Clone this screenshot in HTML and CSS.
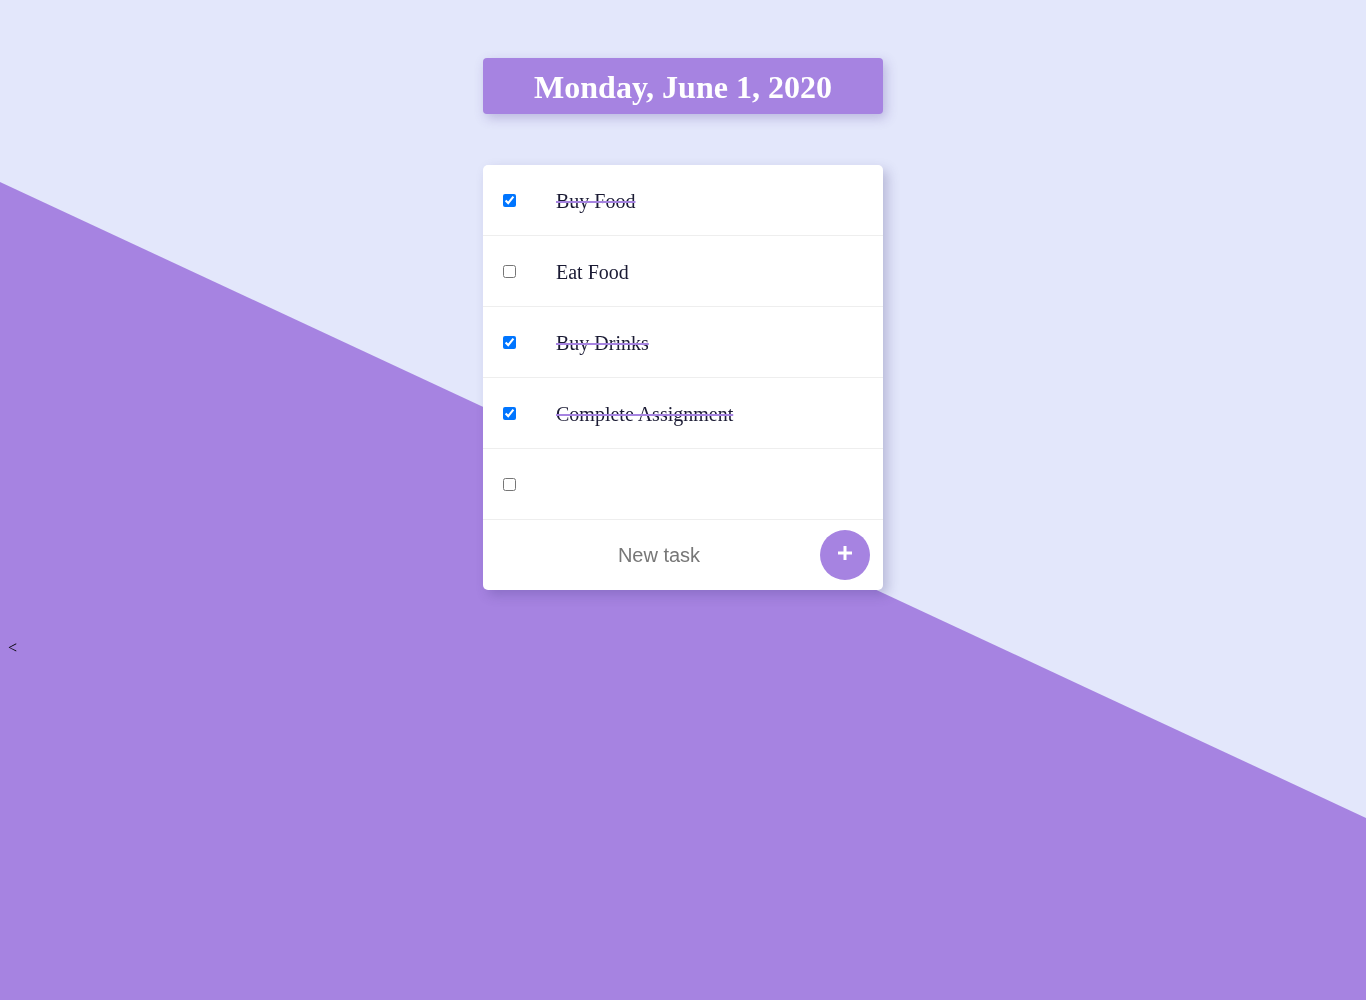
FILE: index.html
```html
<!DOCTYPE html>
<html>
<head>
<meta charset="utf-8">
<link rel="stylesheet" href="styles.css">
</head>
<body>
<div class="bg"></div>
<main class="app">
  <h1 class="date">Monday, June 1, 2020</h1>
  <section class="card">
    <div class="item"><input type="checkbox" checked><span class="label done">Buy Food</span></div>
    <div class="item"><input type="checkbox"><span class="label">Eat Food</span></div>
    <div class="item"><input type="checkbox" checked><span class="label done">Buy Drinks</span></div>
    <div class="item"><input type="checkbox" checked><span class="label done">Complete Assignment</span></div>
    <div class="item"><input type="checkbox"><span class="label"></span></div>
    <form class="new">
      <input class="new-input" type="text" placeholder="New task">
      <button class="add" type="button"><svg width="16" height="16" viewBox="0 0 16 16"><path d="M8 1v14M1 8h14" stroke="#fff" stroke-width="3" fill="none"/></svg></button>
    </form>
  </section>
</main>
<div class="stray">&lt;</div>
</body>
</html>
```
FILE: styles.css
```css
html, body { margin: 0; padding: 0; }
body {
  background: #e3e7fb;
  font-family: "Liberation Serif", serif;
  min-height: 1000px;
  position: relative;
}
.bg {
  position: fixed;
  inset: 0;
  background: #a683e1;
  clip-path: polygon(0 182px, 100% 818px, 100% 100%, 0 100%);
  z-index: 0;
}
.app {
  position: relative;
  z-index: 1;
  width: 400px;
  margin: 0 auto;
  padding-top: 58px;
}
.date {
  margin: 0;
  height: 56px;
  line-height: 58px;
  background: #a683e1;
  color: #fff;
  text-align: center;
  font-size: 32px;
  font-weight: bold;
  border-radius: 4px;
  box-shadow: 3px 4px 12px rgba(90, 70, 160, 0.3);
}
.card {
  margin-top: 51px;
  background: #fff;
  border-radius: 5px;
  box-shadow: 5px 5px 12px rgba(60, 50, 120, 0.25);
}
.item {
  height: 70px;
  border-bottom: 1px solid #eeeeee;
  display: flex;
  align-items: center;
  padding-left: 20px;
}
.item input {
  margin: 0;
  width: 13px;
  height: 13px;
}
.label {
  margin-left: 40px;
  padding-top: 2px;
  font-size: 20px;
  color: #1a1a33;
}
.label.done {
  text-decoration: line-through;
  text-decoration-color: #a683e1;
  text-decoration-thickness: 2px;
}
.new {
  height: 70px;
  display: flex;
  align-items: center;
  padding-right: 13px;
  margin: 0;
}
.new-input {
  flex: 1;
  border: none;
  outline: none;
  background: transparent;
  font-family: "Liberation Sans", Arial, sans-serif;
  font-size: 20px;
  text-align: center;
  padding: 0 0 0 28px;
  margin: 0 13px 0 0;
  min-width: 0;
}
.new-input::placeholder { color: #777; }
.add {
  width: 50px;
  height: 50px;
  border-radius: 50%;
  border: none;
  background: #a683e1;
  padding: 0;
  display: flex;
  align-items: center;
  justify-content: center;
  padding-bottom: 4px;
}
.stray {
  position: relative;
  z-index: 1;
  margin: 49px 0 0 8px;
  font-size: 16px;
  font-family: "Liberation Serif", serif;
}
```
